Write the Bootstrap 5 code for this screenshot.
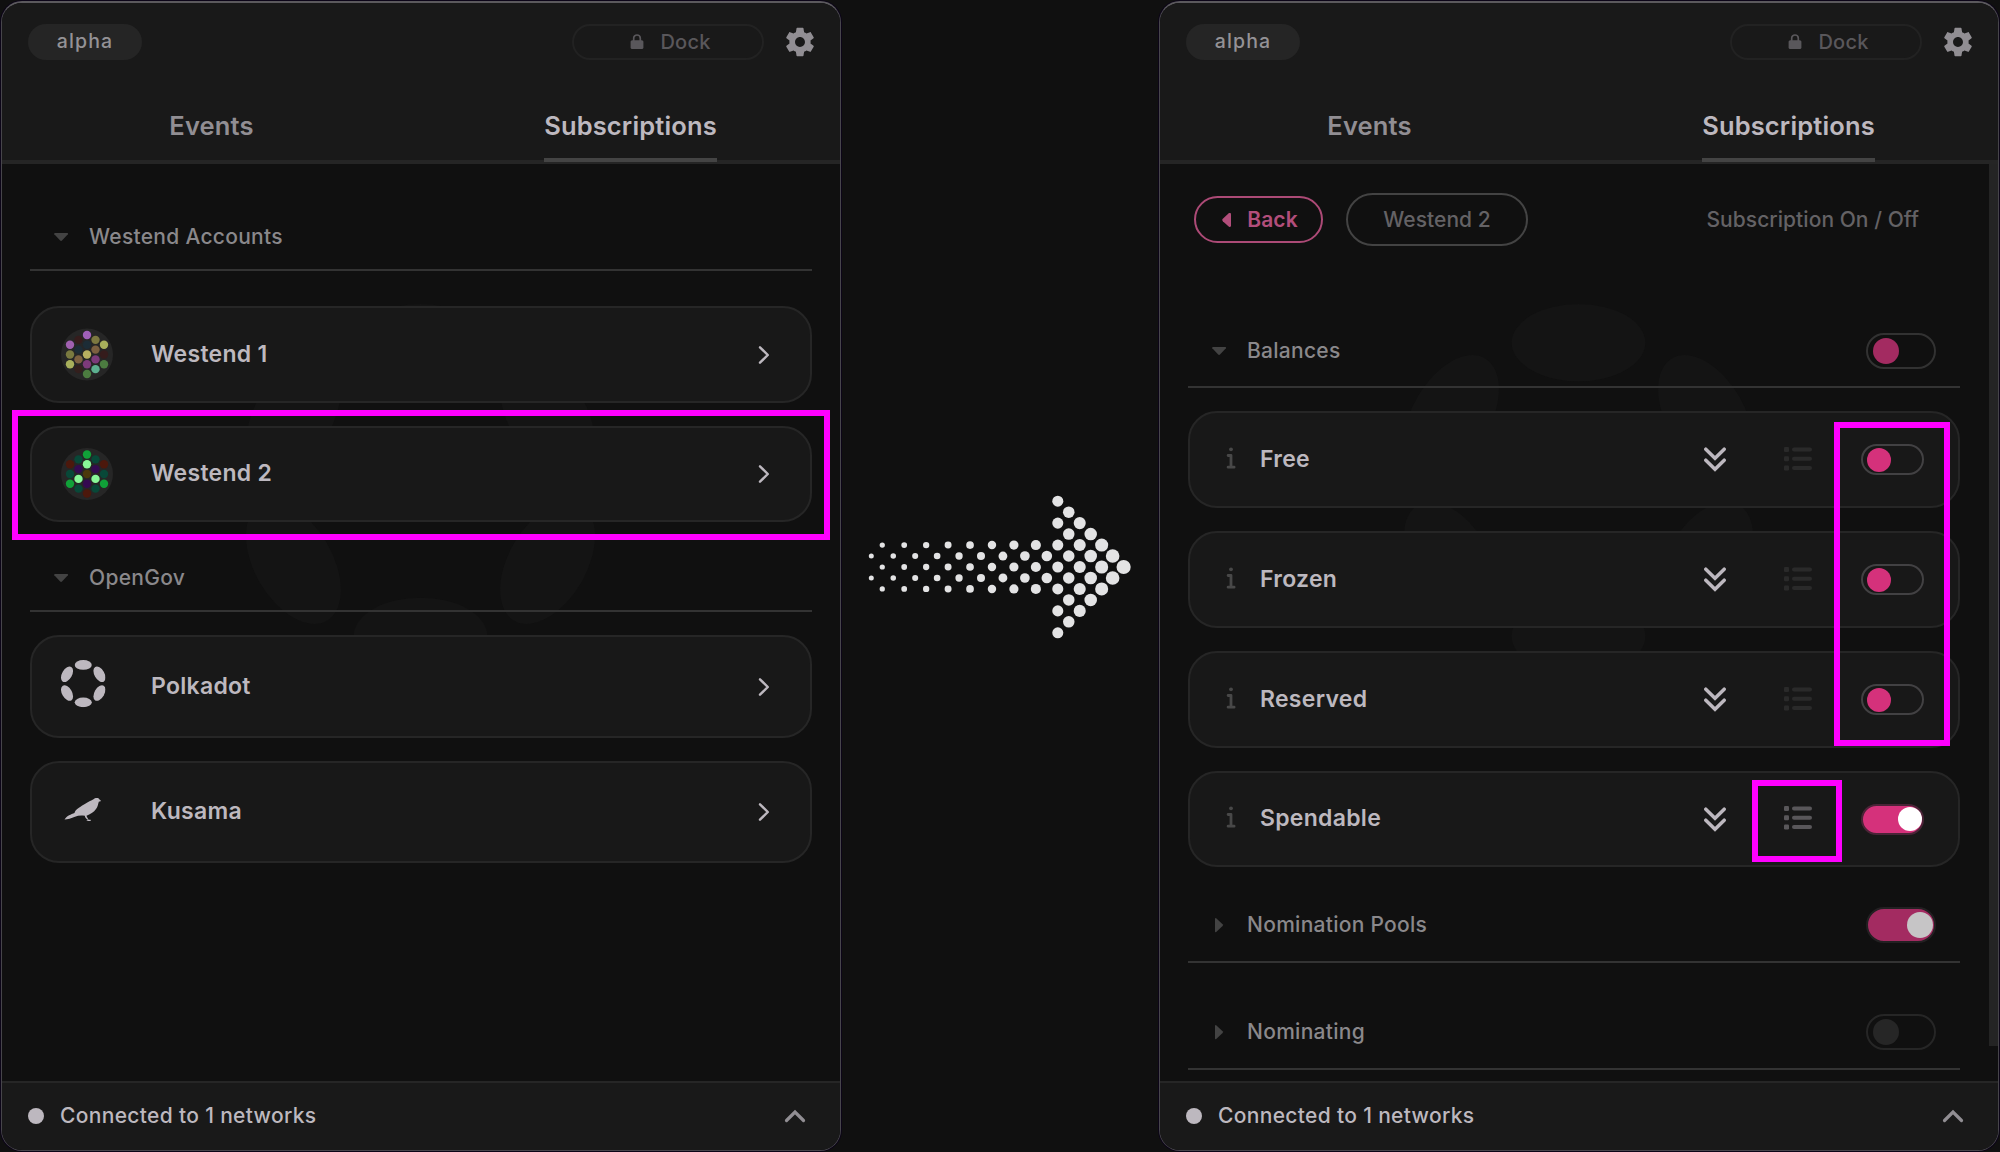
<!DOCTYPE html>
<html lang="en">
<head>
<meta charset="utf-8">
<meta name="viewport" content="width=device-width, initial-scale=1">
<title>Subscriptions</title>
<link href="https://cdn.jsdelivr.net/npm/bootstrap@5.3.0/dist/css/bootstrap.min.css" rel="stylesheet">
<style>
body{background:#101010;font-family:Inter,"Liberation Sans",sans-serif;width:2000px;height:1152px;overflow:hidden;line-height:1.2}
.stage{width:2000px;height:1152px;padding:1px}
.panel{width:840px;height:1150px;border:1px solid #47454b;border-top:2px solid #5b595d;border-radius:21px;background:#101010;position:relative;overflow:hidden;box-shadow:0 0 0 1px #0c0518}
.topbar{background:#191919;padding:21px 22px 0 26px;height:57px}
.gear-ic{width:34px;height:34px;margin:1px 1px 0 19px;fill:#918e93}
.tag-pill{width:114px;height:36px;border-radius:18px;background:#252525;color:#949296;font-size:19.5px;letter-spacing:1.1px;font-weight:500;padding-bottom:1px}
.dock-pill{width:192px;height:36px;border:2px solid #222;border-radius:18px;color:#59575b;font-size:20px;font-weight:500;letter-spacing:.2px;gap:16px;padding-left:5px}
.tabs-row{background:#191919;height:104px;border-bottom:4px solid #252525}
.tab-cell{color:#918e93;font-size:25.5px;font-weight:600;letter-spacing:.15px}
.tab-label{position:relative;height:100px;line-height:132px}
.tab-cell.on{color:#bdb8bf}
.tab-cell.on .tab-label::after{content:"";position:absolute;left:0;right:0;bottom:-2px;height:4px;background:#444}
.pane-body{position:relative;height:917px;overflow:hidden;padding:0 28px}
.pane-scroll{padding-right:38px}
.pane-body>div{position:relative}
.pane-body>.watermark{position:absolute;left:244px;top:140px;width:349px;height:371px;fill:#141414}
.sec-head{border-bottom:2px solid #333;color:#8a888b;font-size:21px;font-weight:500;letter-spacing:.28px;padding-left:23px}
.sec-acct{height:67px}
.sec-net{height:75px;padding-right:24px}
.tri{width:16px;height:16px;margin-right:20px;fill:#434343}
.item{border:2px solid #262626;border-radius:29px;background:#181818;color:#bdb8bf;font-size:23px;font-weight:600;letter-spacing:.28px}
.acct{height:97px;margin-top:23px;padding:0 40px 0 27px}
.pic{width:56px;height:56px}
.acct .label-text{margin-left:36px}
.sub{height:97px;margin-bottom:23px;padding-left:35px;padding-right:34px}
.sub .label-text{margin-left:23px}
.info-ic{width:12px;height:24px;margin-top:-4px;color:#484848}
.rows-ic{margin:-2px 49px 0 58px;color:#2a2a2a}
.rows-ic.live{color:#59575a}
.tg{width:63px;height:31px;border:2px solid #424143;border-radius:16px;padding:0 4px}
.tg i{width:24px;height:24px;border-radius:50%;background:#d5317b}
.tg.big{width:70px;height:36px;border-radius:18px;border-color:#323232;padding:0 5px}
.tg.big i{width:26px;height:26px;background:#a32b61}
.tg.lit{background:#d5317b;justify-content:flex-end;padding-right:0;border-color:#4a2437}
.tg.lit i{background:#fff}
.tg.big.lit{background:#a32b61;border-color:#232022;padding-right:1px}
.tg.big.lit i{background:#c6c5c6}
.tg.big.off{border-color:#262626}
.tg.big.off i{background:#262626}
.crumbs{height:53px;margin-top:29px;padding-left:6px;padding-right:41px;color:#646265;font-size:21px;font-weight:500;letter-spacing:.05px}
.back-pill{width:129px;height:47px;border:2px solid #ac4a76;border-radius:24px;color:#b24e7b;font-weight:600;gap:16px;padding-left:3px}
.name-pill{width:182px;height:53px;border:2px solid #434343;border-radius:27px;margin-left:23px}
.scroller{position:absolute!important;right:0;top:0;width:9px;height:882px;background:#242424}
.footer-bar{height:69px;background:#191919;border-top:2px solid #262626;color:#bdb8bf;font-size:21px;font-weight:500;letter-spacing:.33px;padding:0 34px 2px 26px}
.status-dot{width:16px;height:16px;border-radius:50%;background:#bdb8bf;margin-right:16px}
.between{width:318px;height:1150px}
.marker{position:absolute;border:6px solid #f0f;z-index:5}
.mk-account{left:12px;top:410px;width:818px;height:130px}
.mk-toggles{left:1834px;top:422px;width:116px;height:324px}
.mk-rows{left:1752px;top:780px;width:90px;height:82px}
svg{display:block;flex:none}
</style>
</head>
<body>
<svg width="0" height="0" class="position-absolute">
<defs>
<symbol id="dots-logo" viewBox="0 0 1326 1410"><ellipse cx="663" cy="147" rx="254" ry="147"/><ellipse cx="663" cy="1263" rx="254" ry="147"/><ellipse cx="180" cy="426" rx="254" ry="148" transform="rotate(-60 180 426)"/><ellipse cx="1146" cy="984" rx="254" ry="148" transform="rotate(-60 1146 984)"/><ellipse cx="180" cy="984" rx="254" ry="148" transform="rotate(60 180 984)"/><ellipse cx="1146" cy="426" rx="254" ry="148" transform="rotate(60 1146 426)"/></symbol>
<symbol id="gear" viewBox="0 0 24 24"><path d="M19.43 12.98c.04-.32.07-.64.07-.98s-.03-.66-.07-.98l2.11-1.65c.19-.15.24-.42.12-.64l-2-3.46c-.12-.22-.39-.3-.61-.22l-2.49 1c-.52-.4-1.08-.73-1.69-.98l-.38-2.65C14.46 2.18 14.25 2 14 2h-4c-.25 0-.46.18-.49.42l-.38 2.65c-.61.25-1.17.59-1.69.98l-2.49-1c-.23-.09-.49 0-.61.22l-2 3.46c-.13.22-.07.49.12.64l2.11 1.65c-.04.32-.07.65-.07.98s.03.66.07.98l-2.11 1.65c-.19.15-.24.42-.12.64l2 3.46c.12.22.39.3.61.22l2.49-1c.52.4 1.08.73 1.69.98l.38 2.65c.03.24.24.42.49.42h4c.25 0 .46-.18.49-.42l.38-2.65c.61-.25 1.17-.59 1.69-.98l2.49 1c.23.09.49 0 .61-.22l2-3.46c.12-.22.07-.49-.12-.64l-2.11-1.65zM12 15.5c-1.93 0-3.500-1.570-3.500-3.500s1.570-3.500 3.500-3.500 3.500 1.570 3.500 3.500-1.570 3.500-3.500 3.500z"/></symbol>
<symbol id="lock" viewBox="0 0 14 16"><path d="M3.700 7V4.300a3.300 3.300 0 0 1 6.600 0V7" fill="none" stroke="currentColor" stroke-width="1.700"/><rect x=".6" y="6.200" width="12.800" height="8.800" rx="1.600" fill="currentColor"/></symbol>
<symbol id="info" viewBox="0 0 12 24"><circle cx="6" cy="3.300" r="1.900" fill="currentColor"/><path d="M3.100 9.500H6V21M3.100 21.200H9.100" fill="none" stroke="currentColor" stroke-width="2.800" stroke-linecap="round" stroke-linejoin="round"/></symbol>
<symbol id="down-tri" viewBox="0 0 16 16"><path d="M2 4h12.400q1.200.2.500 1.200L9 11.600q-.9.800-1.800 0L1.300 5.200Q.6 4.200 2 4z"/></symbol>
<symbol id="right-tri" viewBox="0 0 16 16"><path d="M4 2v12.400q.2 1.200 1.200.5L11.600 9q.8-.9 0-1.800L5.200 1.300Q4.200.6 4 2z"/></symbol>
<symbol id="next" viewBox="0 0 12 20"><path d="M2 2.300l7.800 7.700L2 17.700" fill="none" stroke="#bdb8bf" stroke-width="2.400" stroke-linecap="round" stroke-linejoin="round"/></symbol>
<symbol id="up" viewBox="0 0 22 14"><path d="M2.500 11.500L11 3l8.500 8.500" fill="none" stroke="#918e93" stroke-width="3.200" stroke-linecap="round" stroke-linejoin="miter"/></symbol>
<symbol id="more" viewBox="0 0 22 25"><path d="M1.800 2.200L11 11.200 20.200 2.200M1.800 13.200L11 22.200 20.200 13.200" fill="none" stroke="#bdb8bf" stroke-width="3.500" stroke-linecap="round"/></symbol>
<symbol id="rows" viewBox="0 0 28 26"><g fill="currentColor"><rect x="0" y="1" width="5" height="5" rx="1.200"/><rect x="8" y="1.600" width="20" height="4" rx="2"/><rect x="0" y="10.200" width="5" height="5" rx="1.200"/><rect x="8" y="10.700" width="20" height="4" rx="2"/><rect x="0" y="19.400" width="5" height="5" rx="1.200"/><rect x="8" y="19.900" width="20" height="4" rx="2"/></g></symbol>
</defs>
</svg>

<main class="stage d-flex position-relative">
<section class="panel d-flex flex-column">
  <header class="topbar d-flex align-items-start">
    <span class="tag-pill d-flex align-items-center justify-content-center">alpha</span>
    <span class="dock-pill d-flex align-items-center justify-content-center ms-auto"><svg width="14" height="16"><use href="#lock"/></svg>Dock</span>
    <svg class="gear-ic"><use href="#gear"/></svg>
  </header>
  <nav class="tabs-row d-flex">
    <div class="tab-cell w-50 d-flex justify-content-center"><span class="tab-label">Events</span></div>
    <div class="tab-cell on w-50 d-flex justify-content-center"><span class="tab-label">Subscriptions</span></div>
  </nav>
  <div class="pane-body">
    <svg class="watermark"><use href="#dots-logo"/></svg>
    <div class="sec-head sec-acct d-flex align-items-center" style="margin-top:40px"><svg class="tri"><use href="#down-tri"/></svg>Westend Accounts</div>
    <div class="item acct d-flex align-items-center" style="margin-top:35px"><svg class="pic identicon" data-cols="a060b0 7a7a40 a8b05c|351c1c 1c2c36 7c6040 331f1d|a060b8 1c2c36 b8b060 7c3a7a 4c7c40|7c7840 7c6040 7c3a7a 5cb090|a8b05c 351c1c 4c7c40" viewBox="-28 -27.500 56 56"></svg><span class="label-text">Westend 1</span><svg class="ms-auto" width="12" height="20"><use href="#next"/></svg></div>
    <div class="item acct d-flex align-items-center" style="height:96px"><svg class="pic identicon" data-cols="4c180c 084838 10a038|084838 340a50 88f898 084838|10a038 88f898 4c380c 340a50 4c180c|084838 340a50 88f898 084838|4c180c 084838 10a038" viewBox="-28 -28 56 56"></svg><span class="label-text">Westend 2</span><svg class="ms-auto" width="12" height="20"><use href="#next"/></svg></div>
    <div class="sec-head sec-acct d-flex align-items-center" style="margin-top:23px"><svg class="tri"><use href="#down-tri"/></svg>OpenGov</div>
    <div class="item acct d-flex align-items-center" style="height:103px"><svg class="pic" viewBox="0 0 56 56" fill="#bdb8bf"><use href="#dots-logo" x="2" y="1" width="44.500" height="47.300"/></svg><span class="label-text">Polkadot</span><svg class="ms-auto" width="12" height="20"><use href="#next"/></svg></div>
    <div class="item acct d-flex align-items-center" style="height:102px"><svg class="pic" viewBox="0 0 56 56" fill="#bdb8bf"><path d="M5.500 35.500C8 31.500 12 30.500 15.500 29C16 26 20 23.500 25 20.500C29 18 32.500 16.500 34.500 15.300C36 13.700 39.500 13.500 40.500 15.400L42.200 17L39.800 17.800C38.800 20.500 39 22.500 37 25C35 28 31 30.500 27.500 31.800C27.800 33.200 29 34.500 29.500 35.800H31.700V36.900H27.200L29 36C27 34.500 26 33.500 25.800 31.800C22 31.200 19 31.500 16 32.800C12.500 34.300 8.500 35.500 5.500 35.500Z"/></svg><span class="label-text">Kusama</span><svg class="ms-auto" width="12" height="20"><use href="#next"/></svg></div>
  </div>
  <footer class="footer-bar d-flex align-items-center mt-auto"><span class="status-dot"></span>Connected to 1 networks<svg class="ms-auto" width="22" height="14"><use href="#up"/></svg></footer>
</section>

<div class="between"><svg id="arrow" width="318" height="1150" fill="#e3e3e4"></svg></div>

<section class="panel d-flex flex-column">
  <header class="topbar d-flex align-items-start">
    <span class="tag-pill d-flex align-items-center justify-content-center">alpha</span>
    <span class="dock-pill d-flex align-items-center justify-content-center ms-auto"><svg width="14" height="16"><use href="#lock"/></svg>Dock</span>
    <svg class="gear-ic"><use href="#gear"/></svg>
  </header>
  <nav class="tabs-row d-flex">
    <div class="tab-cell w-50 d-flex justify-content-center"><span class="tab-label">Events</span></div>
    <div class="tab-cell on w-50 d-flex justify-content-center"><span class="tab-label">Subscriptions</span></div>
  </nav>
  <div class="pane-body pane-scroll">
    <svg class="watermark"><use href="#dots-logo"/></svg>
    <div class="crumbs d-flex align-items-center"><span class="back-pill d-flex align-items-center justify-content-center"><svg width="9" height="14" fill="#b24e7b"><path d="M7 0q2-.6 2 1.500v11q0 2-2 1.200L.8 8.200Q-.3 7 .8 5.800z"/></svg>Back</span><span class="name-pill d-flex align-items-center justify-content-center">Westend 2</span><span class="ms-auto">Subscription On / Off</span></div>
    <div class="sec-head d-flex align-items-center" style="height:73px;margin-top:69px;padding-right:24px"><svg class="tri"><use href="#down-tri"/></svg>Balances<span class="tg big ms-auto d-flex align-items-center"><i></i></span></div>
    <div class="item sub d-flex align-items-center" style="margin-top:23px"><svg class="info-ic"><use href="#info"/></svg><span class="label-text">Free</span><svg class="ms-auto" width="22" height="25"><use href="#more"/></svg><svg class="rows-ic" width="28" height="26"><use href="#rows"/></svg><span class="tg d-flex align-items-center"><i></i></span></div>
    <div class="item sub d-flex align-items-center"><svg class="info-ic"><use href="#info"/></svg><span class="label-text">Frozen</span><svg class="ms-auto" width="22" height="25"><use href="#more"/></svg><svg class="rows-ic" width="28" height="26"><use href="#rows"/></svg><span class="tg d-flex align-items-center"><i></i></span></div>
    <div class="item sub d-flex align-items-center"><svg class="info-ic"><use href="#info"/></svg><span class="label-text">Reserved</span><svg class="ms-auto" width="22" height="25"><use href="#more"/></svg><svg class="rows-ic" width="28" height="26"><use href="#rows"/></svg><span class="tg d-flex align-items-center"><i></i></span></div>
    <div class="item sub d-flex align-items-center" style="height:96px"><svg class="info-ic"><use href="#info"/></svg><span class="label-text">Spendable</span><svg class="ms-auto" width="22" height="25"><use href="#more"/></svg><svg class="rows-ic live" width="28" height="26"><use href="#rows"/></svg><span class="tg lit d-flex align-items-center"><i></i></span></div>
    <div class="sec-head sec-net d-flex align-items-center" style="margin-top:-2px"><svg class="tri"><use href="#right-tri"/></svg>Nomination Pools<span class="tg big lit ms-auto d-flex align-items-center"><i></i></span></div>
    <div class="sec-head sec-net d-flex align-items-center" style="margin-top:32px"><svg class="tri"><use href="#right-tri"/></svg>Nominating<span class="tg big off ms-auto d-flex align-items-center"><i></i></span></div>
    <div class="scroller"></div>
  </div>
  <footer class="footer-bar d-flex align-items-center mt-auto"><span class="status-dot"></span>Connected to 1 networks<svg class="ms-auto" width="22" height="14"><use href="#up"/></svg></footer>
</section>

<div class="marker mk-account"></div>
<div class="marker mk-toggles"></div>
<div class="marker mk-rows"></div>
</main>
<script>
// Halftone arrow: a staggered dot grid whose radius grows to the right
let dots = '';
for (let c = 0; c < 24; c++) {
  const reach = c < 17 ? 2 : 23 - c;
  for (let r = -reach; r <= reach; r++) {
    if ((r + c) % 2 === 0) continue;
    dots += `<circle cx="${30.3 + c * 10.97}" cy="${566 + r * 10.97}" r="${2.5 + c * 0.115 + c * c * 0.0037}"/>`;
  }
}
document.getElementById('arrow').innerHTML = dots;
// Identicons: five columns of 3-4-5-4-3 coloured dots
document.querySelectorAll('.identicon').forEach(el => {
  let s = '<circle r="26" fill="#262626"/>';
  el.dataset.cols.split('|').forEach((col, i) => {
    const cells = col.split(' ');
    cells.forEach((v, j) => {
      s += `<circle cx="${(i - 2) * 8.5}" cy="${(j - (cells.length - 1) / 2) * 9.77}" r="4.2" fill="#${v}"/>`;
    });
  });
  el.innerHTML = s;
});
</script>
<script src="https://cdn.jsdelivr.net/npm/bootstrap@5.3.0/dist/js/bootstrap.bundle.min.js"></script>
</body>
</html>
